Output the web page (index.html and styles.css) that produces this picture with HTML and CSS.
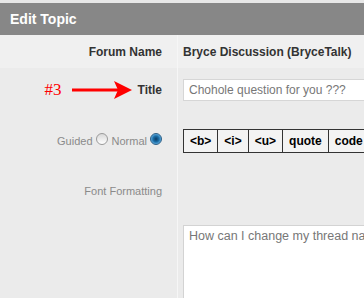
FILE: index.html
```html
<!DOCTYPE html>
<html>
  <head>
    <meta name="viewport" content="width=device-width, initial-scale=1" />
    <title>Edit Topic</title>
    <link rel="stylesheet" href="styles.css">
  </head>

  <body>
    <section class="panel">
      <div class="panel-head">Edit Topic</div>

      <div class="form-row row-forum">
        <div class="label">Forum Name</div>
        <div class="value"><strong>Bryce Discussion (BryceTalk)</strong></div>
      </div>

      <div class="form-row row-title">
        <div class="label">
          <span class="note">#3</span>
          <svg class="arrow" width="60" height="20" viewBox="0 0 60 20">
            <line x1="0" y1="10" x2="46" y2="10" stroke="#f00" stroke-width="3" />
            <polygon points="42,1 60,10 42,19 46,10" fill="#f00" />
          </svg>
          Title
        </div>
        <div class="value">
          <input type="text" class="field" value="Chohole question for you ???" />
        </div>
      </div>

      <div class="form-row row-mode">
        <div class="label light">
          Guided <span class="radio"></span> Normal <span class="radio checked"></span>
        </div>
        <div class="value">
          <div class="toolbar">
            <button type="button">&lt;b&gt;</button>
            <button type="button">&lt;i&gt;</button>
            <button type="button">&lt;u&gt;</button>
            <button type="button">quote</button>
            <button type="button">code</button>
          </div>
        </div>
      </div>

      <div class="form-row row-font">
        <div class="label light">Font Formatting</div>
        <div class="value"></div>
      </div>

      <div class="form-row row-message">
        <div class="label"></div>
        <div class="value">
          <textarea class="message">How can I change my thread nar</textarea>
        </div>
      </div>
    </section>
  </body>
</html>
```

FILE: styles.css
```css
/* ------------------------------ reset ------------------------------ */
* {
  margin: 0;
  padding: 0;
  box-sizing: border-box;
}

body {
  font-family: "Liberation Sans", Arial, sans-serif;
  background: #e7e7e7;
  overflow: hidden;
}

/* ------------------------------ panel ------------------------------ */
.panel {
  width: 364px;
  margin-top: 3px;
}

.panel-head {
  height: 32px;
  background: #878787;
  color: #fff;
  font-size: 14px;
  font-weight: bold;
  padding-left: 10px;
  display: flex;
  align-items: center;
}

/* ------------------------------ rows ------------------------------ */
.form-row {
  display: grid;
  grid-template-columns: 178px 1fr;
  background: #ebebeb;
  overflow: hidden;
}
.row-forum {
  height: 33px;
  background: #f0f0f0;
}
.row-title {
  height: 44px;
}
.row-mode {
  height: 58px;
}
.row-font {
  height: 42px;
}
.row-message {
  height: 120px;
}

.label {
  display: flex;
  align-items: center;
  justify-content: flex-end;
  padding-right: 15px;
  border-right: 1px solid #f6f6f6;
  font-size: 12px;
  font-weight: bold;
  color: #333;
}
.label.light {
  font-weight: normal;
  font-size: 11px;
  color: #8a8a8a;
}

.value {
  display: flex;
  align-items: center;
  padding-left: 5px;
  font-size: 12px;
  color: #333;
  min-width: 0;
}
.row-message .value {
  align-items: flex-start;
  padding-top: 13px;
}

/* ------------------------------ annotation ------------------------------ */
.note {
  font-family: "Liberation Serif", serif;
  font-weight: normal;
  font-size: 17px;
  color: #f00;
  margin-right: 10px;
}
.arrow {
  margin-right: 6px;
}

/* ------------------------------ radios ------------------------------ */
.radio {
  display: inline-block;
  width: 12px;
  height: 12px;
  border-radius: 50%;
  border: 1px solid #9a9a9a;
  background: linear-gradient(#d8d8d8, #fff);
  margin: 0 4px 0 3px;
  position: relative;
  top: -2px;
}
.radio.checked {
  border-color: #2a5d84;
  background: radial-gradient(circle, #0b3a63 0, #1b6fa8 3px, #5aa7dc 5px, #d7ebf7 6px);
  margin-right: 0;
}

/* ------------------------------ inputs ------------------------------ */
.field {
  width: 400px;
  flex-shrink: 0;
  height: 22px;
  border: 1px solid #d6d6d6;
  background: #fff;
  padding-left: 5px;
  font-family: "Liberation Sans", Arial, sans-serif;
  font-size: 12px;
  color: #777;
  outline: 0;
}

.toolbar {
  display: flex;
  flex-shrink: 0;
  border: 1px solid #333;
  border-right: 0;
}
.toolbar button {
  height: 22px;
  padding: 0 6px;
  border: 0;
  border-right: 1px solid #333;
  background: #f3f3f3;
  font-family: "Liberation Sans", Arial, sans-serif;
  font-size: 12px;
  font-weight: bold;
  color: #000;
}

.message {
  width: 400px;
  flex-shrink: 0;
  height: 140px;
  border: 1px solid #d3d3d3;
  background: #fff;
  padding: 3px 5px;
  font-family: "Liberation Sans", Arial, sans-serif;
  font-size: 12.5px;
  color: #777;
  resize: none;
  outline: 0;
}
```
